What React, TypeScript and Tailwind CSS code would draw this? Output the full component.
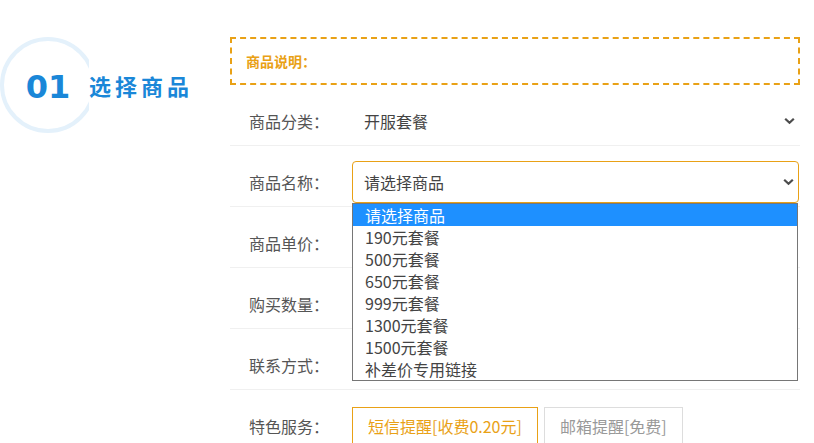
import React from "react";

const Chevron = () => (
  <svg width="11" height="7" viewBox="0 0 11 7" className="absolute right-[4px] top-1/2 -translate-y-1/2">
    <path d="M1.2 1.2 L5.5 5.3 L9.8 1.2" fill="none" stroke="#4d4d4d" strokeWidth="2.2" />
  </svg>
);

const options = [
  "请选择商品",
  "190元套餐",
  "500元套餐",
  "650元套餐",
  "999元套餐",
  "1300元套餐",
  "1500元套餐",
  "补差价专用链接",
];

function Row({ label, children, last }: { label: string; children?: React.ReactNode; last?: boolean }) {
  return (
    <div className={`flex pl-[19px] pt-[15px] pb-[3px] ${last ? "" : "border-b border-[#f0f0f0]"}`}>
      <div className="w-[103px] h-[42px] flex items-center text-[16px] text-[#555] leading-none shrink-0">{label}</div>
      <div className="flex-1 mr-[1px] relative">{children}</div>
    </div>
  );
}

export default function App() {
  return (
    <div className="w-[814px] h-[443px] overflow-hidden bg-white flex font-['Noto_Sans_CJK_SC',sans-serif]">
      <div className="w-[230px] shrink-0 pt-[37px]">
        <div className="flex items-center">
          <div className="w-24 h-24 rounded-full border-4 border-[#e4f1fb] flex items-center justify-center shrink-0 pt-[3px]">
            <span className="font-['DejaVu_Sans',sans-serif] font-bold text-[32px] leading-none text-[#1a87d8]">01</span>
          </div>
          <div className="-ml-[7px] relative bg-white h-[53px] flex items-center text-[22px] font-bold tracking-[4px] text-[#1a87d8] leading-none">
            选择商品
          </div>
        </div>
      </div>
      <div className="w-[570px] shrink-0 pt-[37px]">
        <div className="h-[48px] border-2 border-dashed border-[#e9a116] pl-[14px] flex items-center text-[14px] font-bold text-[#e9a116] leading-none">
          商品说明：
        </div>
        <Row label="商品分类：">
          <div className="relative h-[42px] flex items-center pl-[12px] text-[16px] text-[#444] leading-none">
            开服套餐
            <Chevron />
          </div>
        </Row>
        <Row label="商品名称：">
          <div className="relative h-[42px] flex items-center pl-[11px] text-[16px] text-[#444] leading-none border border-[#e9a116] rounded-[4px]">
            请选择商品
            <Chevron />
          </div>
          <div className="absolute z-10 left-0 right-[1px] top-[42px] bg-white border border-[#767676]">
            {options.map((o, i) => (
              <div
                key={o}
                className={`h-[22px] leading-[22px] pl-[12px] text-[16px] ${i === 0 ? "bg-[#1e90ff] text-white" : "text-[#444]"}`}
              >
                {o}
              </div>
            ))}
          </div>
        </Row>
        <Row label="商品单价：" />
        <Row label="购买数量：" />
        <Row label="联系方式：" />
        <Row label="特色服务：" last>
          <div className="flex gap-[6px] pt-[2px]">
            <div className="h-[38px] px-[15px] flex items-center border border-[#e9a116] text-[#e9a116] text-[16px] leading-none">
              短信提醒[收费0.20元]
            </div>
            <div className="h-[38px] px-[15px] flex items-center border border-[#dddddd] text-[#999] text-[16px] leading-none">
              邮箱提醒[免费]
            </div>
          </div>
        </Row>
      </div>
    </div>
  );
}
